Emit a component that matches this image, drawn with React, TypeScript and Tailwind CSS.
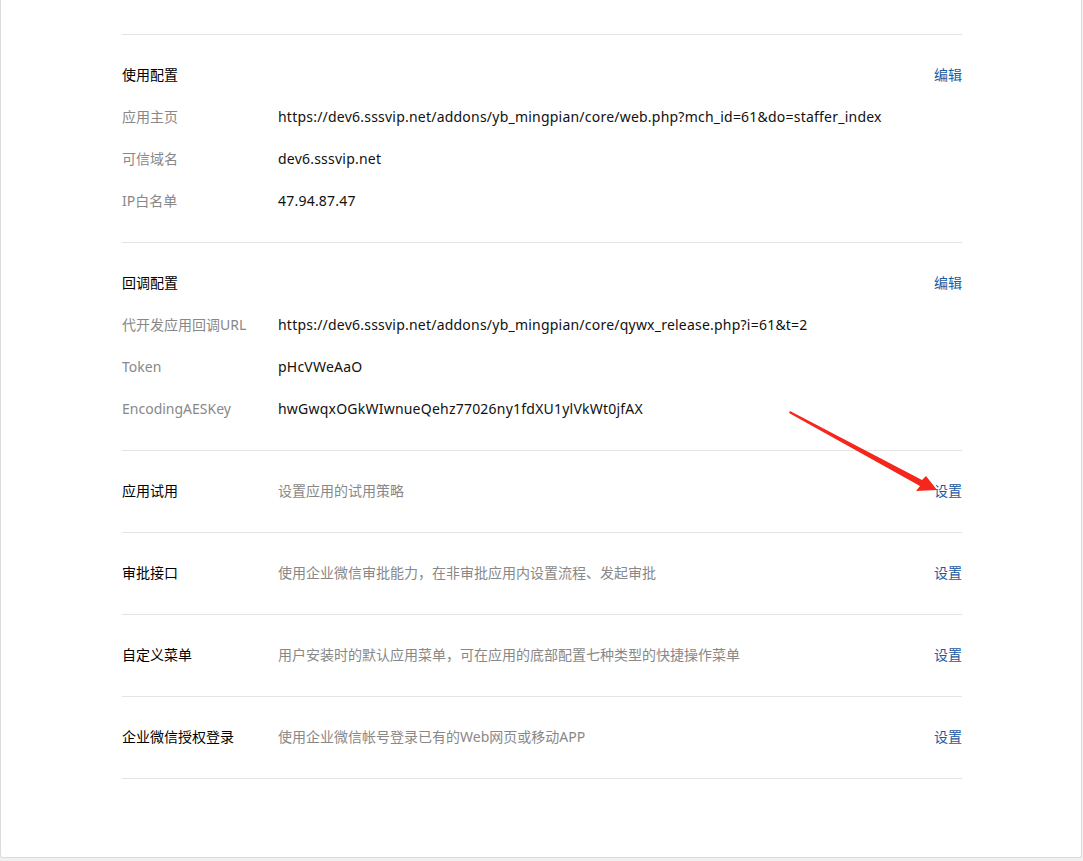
import React from 'react';

type Row = { label: string; value: string };

const LINK = 'text-[#1b5aa3]';

const Section = ({ title, rows }: { title: string; rows: Row[] }) => (
  <div className="border-t border-[#e4e4e4] pt-[18px] pb-[21px]">
    <div className="flex h-[42px] items-center justify-between">
      <span className="text-[#000]">{title}</span>
      <a className={LINK}>编辑</a>
    </div>
    {rows.map((r) => (
      <div key={r.label} className="flex h-[42px] items-center">
        <span className="w-[156px] shrink-0 text-[#888]">{r.label}</span>
        <span className="tracking-[0.22px] text-[#111]">{r.value}</span>
      </div>
    ))}
  </div>
);

const Setting = ({ title, desc }: { title: string; desc: string }) => (
  <div className="flex h-[82px] items-center border-t border-[#e4e4e4] pb-[2px]">
    <span className="w-[156px] shrink-0 text-[#000]">{title}</span>
    <span className="flex-1 text-[#888]">{desc}</span>
    <a className={LINK}>设置</a>
  </div>
);

export default function App() {
  return (
    <div
      className="min-h-screen bg-[#f0f0f0] text-[14px]"
      style={{ fontFamily: '"Microsoft YaHei", "Noto Sans", "Noto Sans CJK SC", sans-serif' }}
    >
      <div className="relative h-[858px] w-[1082px] rounded-b-[3px] border border-t-0 border-[#dcdcdc] bg-white">
        <div className="ml-[121px] w-[840px] pt-[34px]">
          <Section
            title="使用配置"
            rows={[
              { label: '应用主页', value: 'https://dev6.sssvip.net/addons/yb_mingpian/core/web.php?mch_id=61&do=staffer_index' },
              { label: '可信域名', value: 'dev6.sssvip.net' },
              { label: 'IP白名单', value: '47.94.87.47' },
            ]}
          />
          <Section
            title="回调配置"
            rows={[
              { label: '代开发应用回调URL', value: 'https://dev6.sssvip.net/addons/yb_mingpian/core/qywx_release.php?i=61&t=2' },
              { label: 'Token', value: 'pHcVWeAaO' },
              { label: 'EncodingAESKey', value: 'hwGwqxOGkWIwnueQehz77026ny1fdXU1ylVkWt0jfAX' },
            ]}
          />
          <Setting title="应用试用" desc="设置应用的试用策略" />
          <Setting title="审批接口" desc="使用企业微信审批能力，在非审批应用内设置流程、发起审批" />
          <Setting title="自定义菜单" desc="用户安装时的默认应用菜单，可在应用的底部配置七种类型的快捷操作菜单" />
          <Setting title="企业微信授权登录" desc="使用企业微信帐号登录已有的Web网页或移动APP" />
          <div className="border-t border-[#e4e4e4]" />
        </div>
        <svg className="pointer-events-none absolute left-0 top-0" width="1082" height="858">
          <polygon
            points="789,411 921,480 925,476 936,490 915,491 919,486 788,413"
            fill="#f5261c"
          />
        </svg>
      </div>
    </div>
  );
}
